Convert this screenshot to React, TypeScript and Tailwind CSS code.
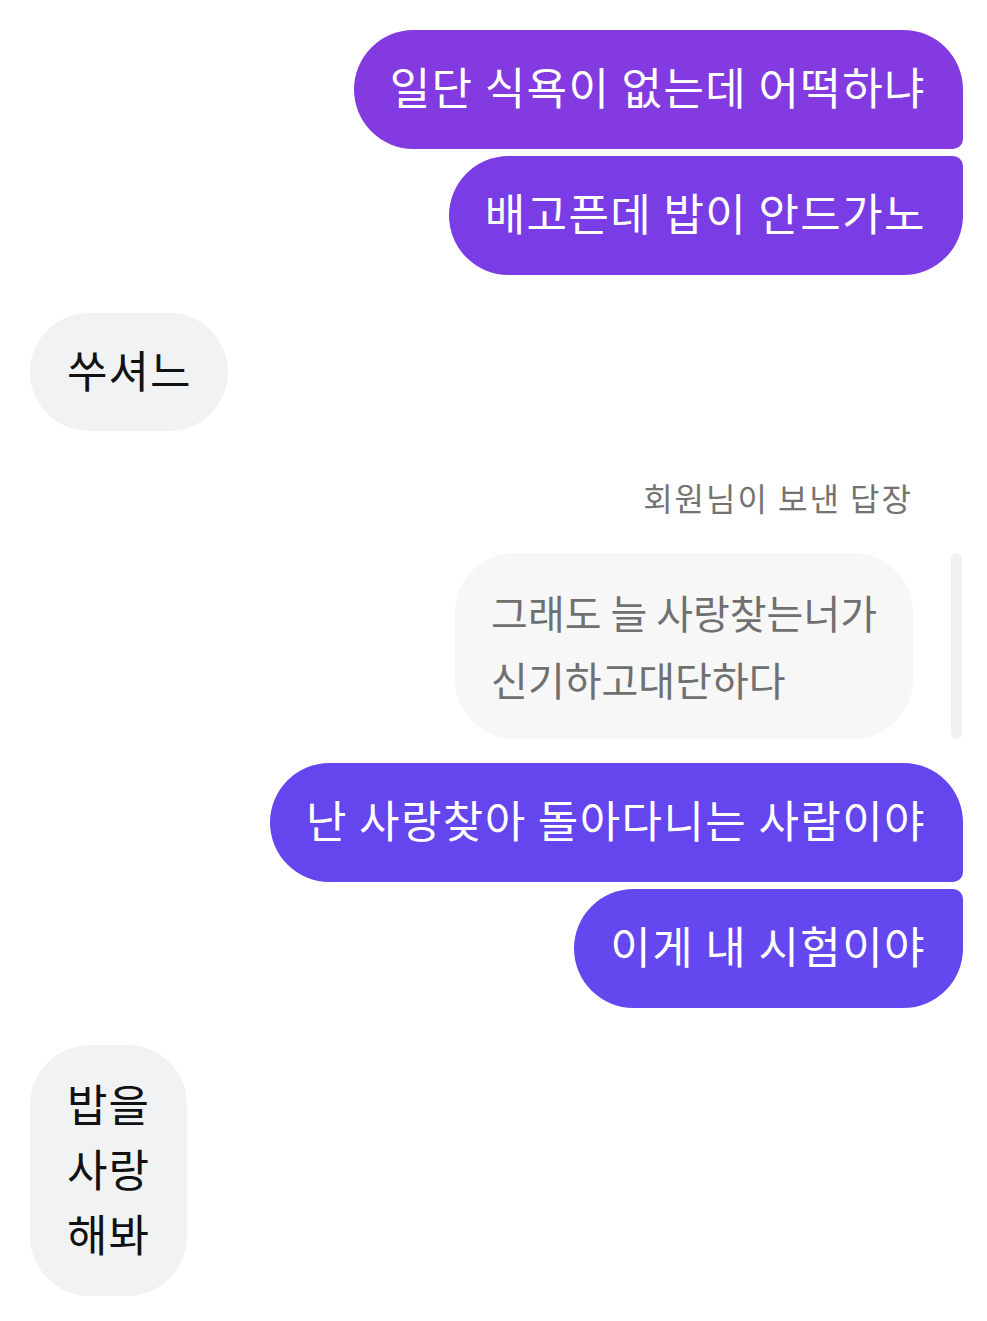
import React from "react";

const font = { fontFamily: '"Noto Sans CJK KR", "Noto Sans", sans-serif' };

type Msg = { text: string; color: string; corner: string };

const Mine = ({ text, color, corner }: Msg) => (
  <div className="flex justify-end">
    <div
      className={`${color} ${corner} text-white text-[44px] leading-[57px] tracking-[1.4px] pl-[36px] pr-[37px] pt-[28px] pb-[34px] whitespace-nowrap`}
    >
      {text}
    </div>
  </div>
);

const Theirs = ({ lines }: { lines: string[] }) => (
  <div className="flex justify-start">
    <div className="bg-[#f1f2f4] rounded-[60px] text-[#111] text-[44px] leading-[65px] tracking-[1px] pl-[37px] pr-[37px] pt-[26px] pb-[30px]">
      {lines.map((l, i) => (
        <div key={i}>{l}</div>
      ))}
    </div>
  </div>
);

export default function App() {
  return (
    <div className="bg-white min-h-[1321px] w-[987px] pl-[30px] pr-[24px] pt-[30px]" style={font}>
      <div className="flex flex-col gap-[7px]">
        <Mine
          text="일단 식욕이 없는데 어떡하냐"
          color="bg-[#843ae1]"
          corner="rounded-[60px] rounded-br-[10px]"
        />
        <Mine
          text="배고픈데 밥이 안드가노"
          color="bg-[#7a3de5]"
          corner="rounded-[60px] rounded-tr-[10px]"
        />
      </div>

      <div className="mt-[38px]">
        <div className="flex justify-start">
          <div className="bg-[#f1f2f4] rounded-[60px] text-[#111] text-[44px] leading-[64px] tracking-[1px] pl-[37px] pr-[37px] pt-[24px] pb-[30px]">
            쑤셔느
          </div>
        </div>
      </div>

      <div className="mt-[43px] flex justify-end pr-[50px]">
        <span className="text-[32px] leading-[46px] tracking-[2px] text-[#737373]">회원님이 보낸 답장</span>
      </div>

      <div className="mt-[33px] flex justify-end items-stretch gap-[38px]">
        <div className="bg-[#f7f7f8] rounded-[60px] text-[#707070] text-[40px] leading-[67px] pl-[36px] pr-[36px] py-[26px]">
          <div>그래도 늘 사랑찾는너가</div>
          <div>신기하고대단하다</div>
        </div>
        <div className="w-[11px] mr-[1px] bg-[#f0f1f3] rounded-full" />
      </div>

      <div className="mt-[24px] flex flex-col gap-[7px]">
        <Mine
          text="난 사랑찾아 돌아다니는 사람이야"
          color="bg-[#6445ee]"
          corner="rounded-[60px] rounded-br-[10px]"
        />
        <Mine
          text="이게 내 시험이야"
          color="bg-[#6447ef]"
          corner="rounded-[60px] rounded-tr-[10px]"
        />
      </div>

      <div className="mt-[37px]">
        <Theirs lines={["밥을", "사랑", "해봐"]} />
      </div>
    </div>
  );
}
